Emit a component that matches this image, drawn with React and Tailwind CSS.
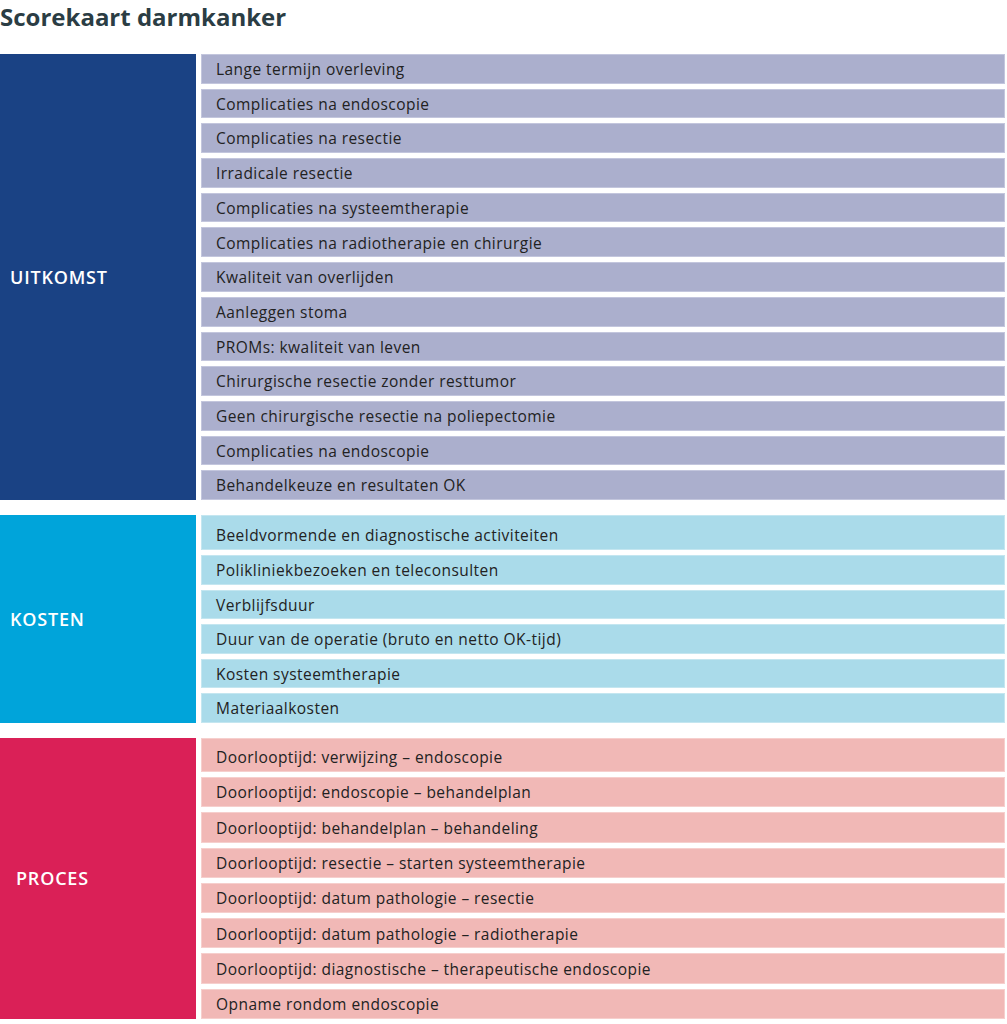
import React from "react";

const sections = [
  {
    label: "UITKOMST",
    labelClass: "pl-[10px]",
    block: "bg-[#1a4284]",
    row: "bg-[#abafcd] border-[#c3c6dd]",
    height: "h-[446px]",
    items: [
      "Lange termijn overleving",
      "Complicaties na endoscopie",
      "Complicaties na resectie",
      "Irradicale resectie",
      "Complicaties na systeemtherapie",
      "Complicaties na radiotherapie en chirurgie",
      "Kwaliteit van overlijden",
      "Aanleggen stoma",
      "PROMs: kwaliteit van leven",
      "Chirurgische resectie zonder resttumor",
      "Geen chirurgische resectie na poliepectomie",
      "Complicaties na endoscopie",
      "Behandelkeuze en resultaten OK",
    ],
  },
  {
    label: "KOSTEN",
    labelClass: "pl-[10px]",
    block: "bg-[#00a4da]",
    row: "bg-[#aadbea] border-[#c4e6f0]",
    height: "h-[208px]",
    first: "pt-[7px] h-[35px] flex-none",
    items: [
      "Beeldvormende en diagnostische activiteiten",
      "Polikliniekbezoeken en teleconsulten",
      "Verblijfsduur",
      "Duur van de operatie (bruto en netto OK-tijd)",
      "Kosten systeemtherapie",
      "Materiaalkosten",
    ],
  },
  {
    label: "PROCES",
    labelClass: "pl-[16px]",
    block: "bg-[#da2057]",
    row: "bg-[#f1b8b6] border-[#f6cfcd]",
    height: "h-[281px]",
    first: "pt-[6px] h-[34px] flex-none",
    items: [
      "Doorlooptijd: verwijzing – endoscopie",
      "Doorlooptijd: endoscopie – behandelplan",
      "Doorlooptijd: behandelplan – behandeling",
      "Doorlooptijd: resectie – starten systeemtherapie",
      "Doorlooptijd: datum pathologie – resectie",
      "Doorlooptijd: datum pathologie – radiotherapie",
      "Doorlooptijd: diagnostische – therapeutische endoscopie",
      "Opname rondom endoscopie",
    ],
  },
];

const Section = ({ section }) => (
  <div className={`flex gap-[5px] ${section.height}`}>
    <div
      className={`w-[196px] shrink-0 flex items-center ${section.block} ${section.labelClass}`}
    >
      <span className="text-white text-[18px] font-semibold tracking-[0.8px]">
        {section.label}
      </span>
    </div>
    <div className="flex-1 flex flex-col gap-[5px] pr-[2px]">
      {section.items.map((item, i) => (
        <div
          key={i}
          className={`flex items-center pl-[14px] border ${section.row} ${
            i === 0 && section.first ? section.first : "flex-1 pt-[2px]"
          }`}
        >
          <span className="text-[15.5px] font-medium text-[#222] leading-none tracking-[0.45px]">
            {item}
          </span>
        </div>
      ))}
    </div>
  </div>
);

const App = () => {
  return (
    <div
      className="w-[1007px] h-[1024px] bg-white overflow-hidden"
      style={{ fontFamily: "'Open Sans', Lato, sans-serif" }}
    >
      <h1 className="h-[54px] pt-[1px] text-[24px] font-bold text-[#2b3d44] leading-[32px]">
        Scorekaart darmkanker
      </h1>
      <div className="flex flex-col gap-[15px]">
        {sections.map((s) => (
          <Section key={s.label} section={s} />
        ))}
      </div>
    </div>
  );
};

export default App;
